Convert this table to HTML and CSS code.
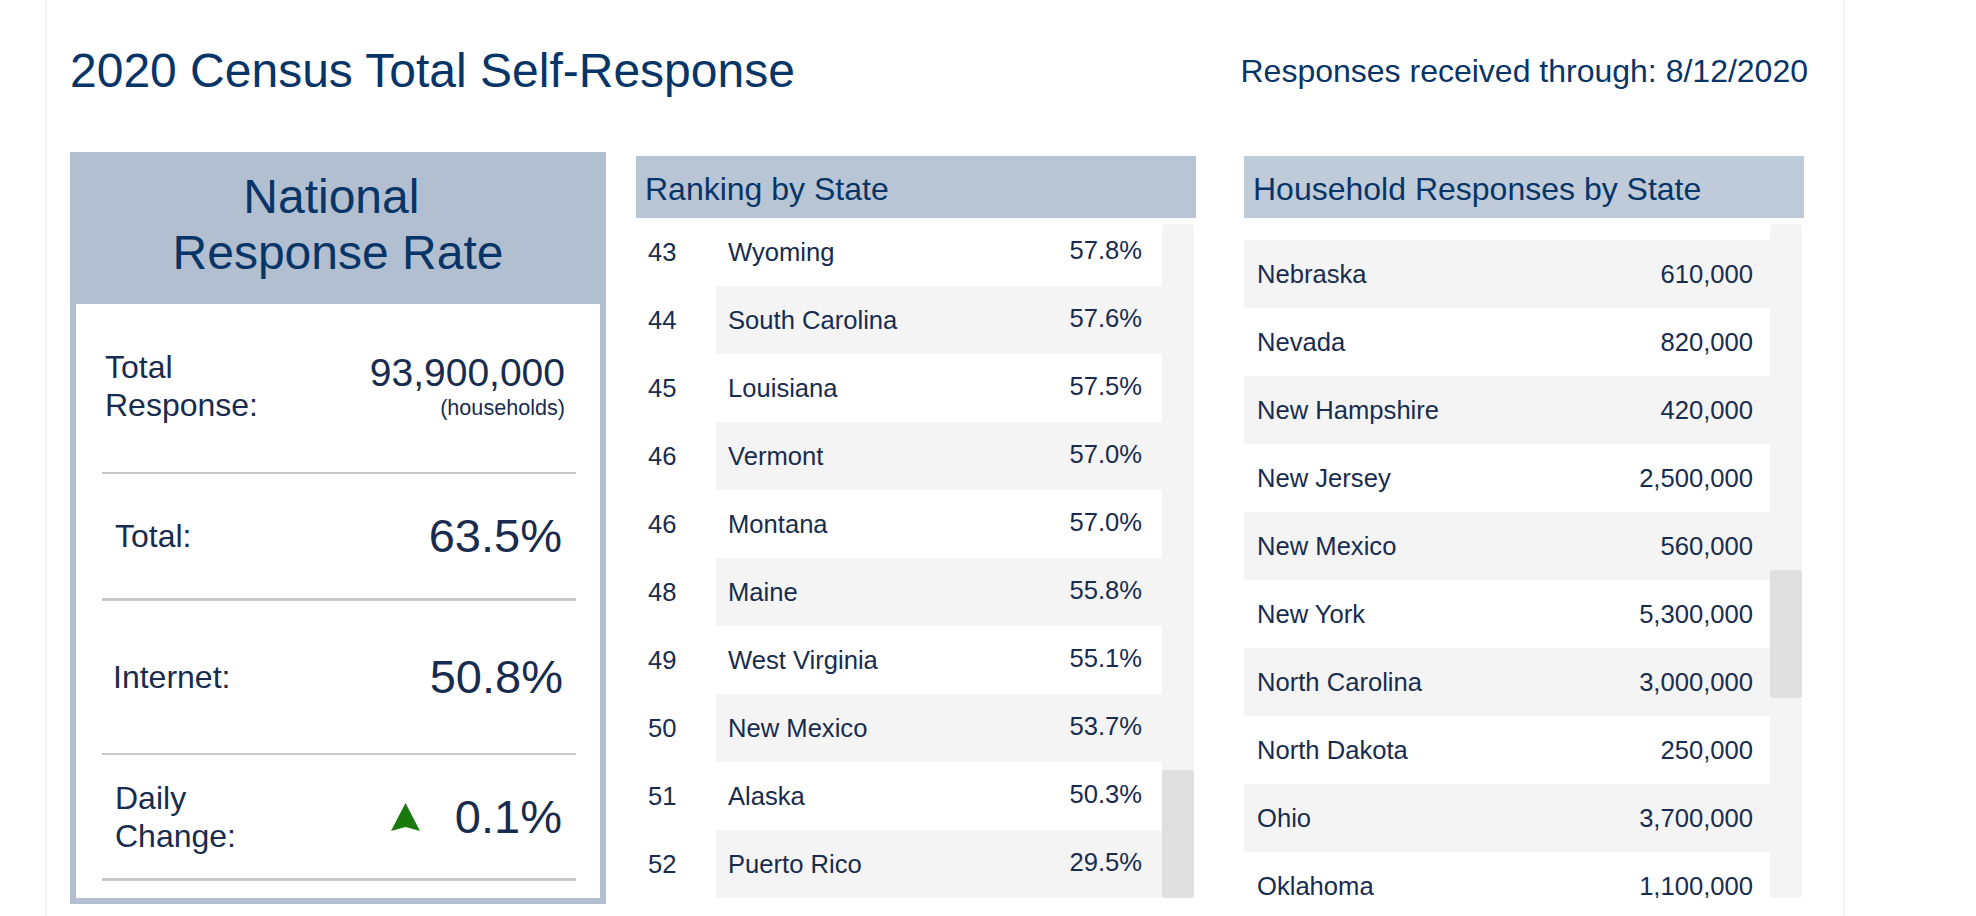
FILE: index.html
```html
<!DOCTYPE html>
<html lang="en">
<head>
<meta charset="utf-8">
<title>2020 Census Total Self-Response</title>
<link rel="stylesheet" href="styles.css">
</head>
<body>
<div class="page">
  <header class="top">
    <h1 class="title">2020 Census Total Self-Response</h1>
    <div class="asof">Responses received through: 8/12/2020</div>
  </header>

  <main class="cols">
    <section class="national">
      <div class="nat-head">National&nbsp;<br>Response Rate</div>
      <div class="nat-body">
        <div class="stat stat-first">
          <div class="label">Total<br>Response:</div>
          <div class="value-stack">
            <div class="value-mid">93,900,000</div>
            <div class="unit">(households)</div>
          </div>
        </div>
        <div class="rule rule-2"></div>
        <div class="stat stat-total">
          <div class="label">Total:</div>
          <div class="value-big">63.5%</div>
        </div>
        <div class="rule rule-3"></div>
        <div class="stat stat-internet">
          <div class="label">Internet:</div>
          <div class="value-big">50.8%</div>
        </div>
        <div class="rule rule-2"></div>
        <div class="stat stat-daily">
          <div class="label">Daily<br>Change:</div>
          <div class="change">
            <svg class="arrow-up" width="29" height="28" viewBox="0 0 29 28" aria-hidden="true"><polygon points="14.5,0 29,28 14.5,24 0,28" fill="#19790d"/></svg>
            <span class="value-big">0.1%</span>
          </div>
        </div>
        <div class="rule rule-3"></div>
      </div>
    </section>

    <section class="panel panel-rank">
      <div class="panel-head">Ranking by State</div>
      <div class="panel-body">
        <div class="scroll-view">
          <div class="rank-list">
            <div class="rank-row"><div class="rank">43</div><div class="cell"><span>Wyoming</span><span class="pct">57.8%</span></div></div>
            <div class="rank-row"><div class="rank">44</div><div class="cell alt"><span>South Carolina</span><span class="pct">57.6%</span></div></div>
            <div class="rank-row"><div class="rank">45</div><div class="cell"><span>Louisiana</span><span class="pct">57.5%</span></div></div>
            <div class="rank-row"><div class="rank">46</div><div class="cell alt"><span>Vermont</span><span class="pct">57.0%</span></div></div>
            <div class="rank-row"><div class="rank">46</div><div class="cell"><span>Montana</span><span class="pct">57.0%</span></div></div>
            <div class="rank-row"><div class="rank">48</div><div class="cell alt"><span>Maine</span><span class="pct">55.8%</span></div></div>
            <div class="rank-row"><div class="rank">49</div><div class="cell"><span>West Virginia</span><span class="pct">55.1%</span></div></div>
            <div class="rank-row"><div class="rank">50</div><div class="cell alt"><span>New Mexico</span><span class="pct">53.7%</span></div></div>
            <div class="rank-row"><div class="rank">51</div><div class="cell"><span>Alaska</span><span class="pct">50.3%</span></div></div>
            <div class="rank-row"><div class="rank">52</div><div class="cell alt"><span>Puerto Rico</span><span class="pct">29.5%</span></div></div>
          </div>
        </div>
        <div class="track"><div class="thumb thumb-rank"></div></div>
      </div>
    </section>

    <section class="panel panel-house">
      <div class="panel-head">Household Responses by State</div>
      <div class="panel-body">
        <div class="scroll-view">
          <div class="house-list">
            <div class="house-row alt"><span>Nebraska</span><span>610,000</span></div>
            <div class="house-row"><span>Nevada</span><span>820,000</span></div>
            <div class="house-row alt"><span>New Hampshire</span><span>420,000</span></div>
            <div class="house-row"><span>New Jersey</span><span>2,500,000</span></div>
            <div class="house-row alt"><span>New Mexico</span><span>560,000</span></div>
            <div class="house-row"><span>New York</span><span>5,300,000</span></div>
            <div class="house-row alt"><span>North Carolina</span><span>3,000,000</span></div>
            <div class="house-row"><span>North Dakota</span><span>250,000</span></div>
            <div class="house-row alt"><span>Ohio</span><span>3,700,000</span></div>
            <div class="house-row"><span>Oklahoma</span><span>1,100,000</span></div>
          </div>
        </div>
        <div class="track"><div class="thumb thumb-house"></div></div>
      </div>
    </section>
  </main>
</div>
</body>
</html>
```

FILE: styles.css
```css
html, body {
  margin: 0;
  padding: 0;
  height: 916px;
  overflow: hidden;
  background: #ffffff;
}

body {
  font-family: "Liberation Sans", Arial, sans-serif;
  color: #172c4e;
}

.page {
  box-sizing: border-box;
  margin-left: 45px;
  width: 1800px;
  height: 916px;
  border-left: 2px solid #f3f3f3;
  border-right: 2px solid #f3f3f3;
  padding: 43px 35px 0 23px;
}

/* ---------- top header ---------- */
.top {
  display: flex;
  justify-content: space-between;
  align-items: center;
  height: 56px;
}

.title {
  margin: 0;
  font-size: 48px;
  line-height: 56px;
  font-weight: normal;
  color: #083567;
}

.asof {
  font-size: 32px;
  line-height: 40px;
  color: #083567;
}

/* ---------- columns ---------- */
.cols {
  display: flex;
  align-items: flex-start;
  margin-top: 53px;
}

/* ---------- national box ---------- */
.national {
  box-sizing: border-box;
  width: 536px;
  border: 6px solid #b1bfd0;
  border-top-width: 0;
  background: #ffffff;
}

.nat-head {
  background: #b1bfd0;
  height: 152px;
  box-sizing: border-box;
  padding-top: 17px;
  text-align: center;
  font-size: 48px;
  line-height: 56px;
  color: #083567;
}

.nat-body {
  box-sizing: border-box;
  height: 594px;
  padding: 0 24px 0 26px;
}

.stat {
  display: flex;
  justify-content: space-between;
  align-items: center;
  box-sizing: border-box;
}

.label {
  font-size: 32px;
  line-height: 38px;
  color: #172c4e;
}

.stat-first {
  height: 168px;
  padding: 0 11px 4px 3px;
}

.stat-total {
  height: 124px;
  padding: 0 14px 0 13px;
}

.stat-internet {
  height: 152px;
  padding: 0 13px 0 11px;
}

.stat-daily {
  height: 123px;
  padding: 0 14px 0 13px;
}

.value-stack {
  text-align: right;
}

.value-mid {
  font-size: 39px;
  line-height: 44px;
}

.unit {
  font-size: 21.6px;
  line-height: 26px;
}

.value-big {
  font-size: 47px;
  line-height: 54px;
  color: #172c4e;
}

.change {
  display: flex;
  align-items: center;
  gap: 35px;
}

.arrow-up {
  display: block;
}

.rule {
  background: #c9c9c9;
}

.rule-2 {
  height: 2px;
}

.rule-3 {
  height: 3px;
}

/* ---------- list panels ---------- */
.panel {
  width: 560px;
  margin-top: 4px;
}

.panel-rank {
  margin-left: 30px;
}

.panel-house {
  margin-left: 48px;
}

.panel-head {
  box-sizing: border-box;
  height: 62px;
  padding: 5px 0 0 9px;
  font-size: 32px;
  line-height: 57px;
  color: #083567;
}

.panel-rank .panel-head {
  background: #b8c5d5;
}

.panel-house .panel-head {
  background: #bfcbd9;
}

.panel-body {
  display: flex;
  margin-top: 6px;
  height: 674px;
}

.scroll-view {
  width: 526px;
  height: 674px;
  overflow: hidden;
}

.track {
  width: 32px;
  height: 674px;
  background: #f4f4f4;
  border-radius: 3px;
}

.thumb {
  height: 128px;
  background: #dfdfdf;
  border-radius: 3px;
}

.thumb-rank {
  margin-top: 546px;
}

.thumb-house {
  margin-top: 346px;
}

/* ranking rows */
.rank-list {
  margin-top: -6px;
  font-size: 25.6px;
}

.rank-row {
  display: flex;
  height: 68px;
}

.rank {
  box-sizing: border-box;
  width: 80px;
  padding-left: 12px;
  display: flex;
  align-items: center;
}

.cell {
  flex: 1;
  display: flex;
  justify-content: space-between;
  align-items: center;
  padding: 0 20px 0 12px;
}

.pct {
  position: relative;
  top: -2px;
}

.alt {
  background: #f4f4f4;
}

/* household rows */
.house-list {
  padding-top: 16px;
  font-size: 25.6px;
}

.house-row {
  display: flex;
  justify-content: space-between;
  align-items: center;
  height: 68px;
  padding: 0 17px 0 13px;
}
```
